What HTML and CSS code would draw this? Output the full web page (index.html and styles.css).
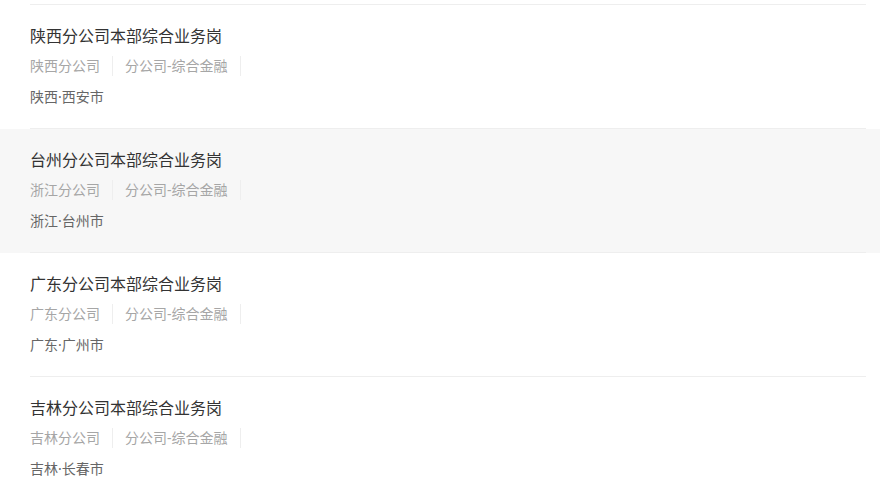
FILE: index.html
```html
<!DOCTYPE html>
<html lang="zh-CN">
<head>
  <meta charset="UTF-8">
  <meta name="viewport" content="width=device-width, initial-scale=1.0">
  <title>职位列表</title>
  <link rel="stylesheet" href="styles.css">
</head>
<body>
  <div class="job-list">
    <div class="job-item">
      <div class="job-inner">
        <div class="job-title">陕西分公司本部综合业务岗</div>
        <div class="job-meta">
          <span>陕西分公司</span>
          <span>分公司-综合金融</span>
        </div>
        <div class="job-place">陕西·西安市</div>
      </div>
    </div>
    <div class="job-item active">
      <div class="job-inner">
        <div class="job-title">台州分公司本部综合业务岗</div>
        <div class="job-meta">
          <span>浙江分公司</span>
          <span>分公司-综合金融</span>
        </div>
        <div class="job-place">浙江·台州市</div>
      </div>
    </div>
    <div class="job-item">
      <div class="job-inner">
        <div class="job-title">广东分公司本部综合业务岗</div>
        <div class="job-meta">
          <span>广东分公司</span>
          <span>分公司-综合金融</span>
        </div>
        <div class="job-place">广东·广州市</div>
      </div>
    </div>
    <div class="job-item">
      <div class="job-inner">
        <div class="job-title">吉林分公司本部综合业务岗</div>
        <div class="job-meta">
          <span>吉林分公司</span>
          <span>分公司-综合金融</span>
        </div>
        <div class="job-place">吉林·长春市</div>
      </div>
    </div>
  </div>
</body>
</html>
```
FILE: styles.css
```css
body {
  margin: 0;
  font-family: "Noto Sans", "Noto Sans CJK SC", sans-serif;
  color: #333;
  background: #fff;
}
.job-list {
  padding-top: 4px;
}
.job-list::before {
  content: "";
  display: block;
  margin: 0 14px 0 30px;
  border-top: 1px solid #eee;
}
.job-item.active {
  background-color: #f7f7f7;
}
.job-inner {
  margin: 0 14px 0 30px;
  padding: 20px 0 21px;
  border-bottom: 1px solid #eee;
}
.job-title {
  font-size: 16px;
  line-height: 22px;
  color: #333;
}
.job-meta {
  display: flex;
  margin-top: 9px;
  font-size: 14px;
  line-height: 20px;
  color: #a6a6a6;
}
.job-meta span {
  padding: 0 12px;
  border-right: 1px solid #eee;
}
.job-meta span:first-child {
  padding-left: 0;
}
.job-place {
  margin-top: 11px;
  font-size: 14px;
  line-height: 20px;
  color: #666;
}
```
